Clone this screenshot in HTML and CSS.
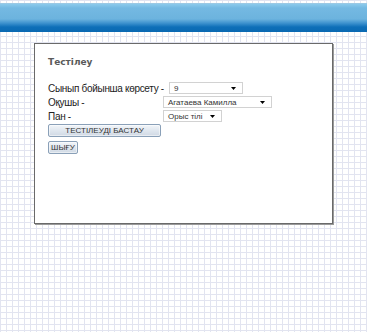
FILE: index.html
```html
<!DOCTYPE html>
<html lang="kk">
<head>
    <meta charset="UTF-8">
    <meta name="viewport" content="width=device-width, initial-scale=1.0">
    <title>Тестілеу</title>
    <link rel="stylesheet" href="styles.css">
</head>
<body>
    <header class="topbar"></header>

    <main class="panel">
        <h1 class="panel-title">Тестілеу</h1>

        <div class="row row-class">
            <span class="label">Сынып бойынша көрсету -</span>
            <div class="dropdown dd-class">
                <span>9</span>
                <svg width="5" height="3" viewBox="0 0 5 3"><path d="M0 0H5L2.5 3Z" fill="#000"/></svg>
            </div>
        </div>

        <div class="row">
            <span class="label label-fixed">Оқушы -</span>
            <div class="dropdown dd-student">
                <span>Агатаева Камилла</span>
                <svg width="5" height="3" viewBox="0 0 5 3"><path d="M0 0H5L2.5 3Z" fill="#000"/></svg>
            </div>
        </div>

        <div class="row">
            <span class="label label-fixed">Пан -</span>
            <div class="dropdown dd-subject">
                <span>Орыс тілі</span>
                <svg width="5" height="3" viewBox="0 0 5 3"><path d="M0 0H5L2.5 3Z" fill="#000"/></svg>
            </div>
        </div>

        <button class="btn btn-start">ТЕСТІЛЕУДІ БАСТАУ</button>
        <button class="btn btn-exit">ШЫҒУ</button>
    </main>
</body>
</html>
```

FILE: styles.css
```css
body {
    margin: 0;
    padding-top: 3px;
    font-family: 'Liberation Sans', Arial, sans-serif;
    color: #222;
    background-color: #fff;
    background-image:
        linear-gradient(to right, #e2e4f0 1px, transparent 1px),
        linear-gradient(to bottom, #e2e4f0 1px, transparent 1px);
    background-size: 6px 6px;
    min-height: 329px;
}

.topbar {
    height: 29px;
    background: linear-gradient(to bottom,
        #8ccaec 0px, #74b9e2 4px, #6cb3de 15px,
        #3f93cf 19px, #0e6fb8 23px, #0a69b2 28px, #0b5f9f 29px);
    border-top: 1px solid #9bc9e4;
    box-sizing: border-box;
}

.panel {
    margin: 11px 0 0 34px;
    width: 299px;
    height: 181px;
    box-sizing: border-box;
    background: #fff;
    border: 1px solid #6a6a6a;
    box-shadow: 1px 1px 0 #9a9a9a;
    padding: 12px 0 0 13px;
}

.panel-title {
    margin: 0;
    font-family: 'DejaVu Sans', Verdana, sans-serif;
    font-size: 9px;
    line-height: 13px;
    font-weight: bold;
    color: #5a5a5a;
}

.row {
    display: flex;
    align-items: center;
    height: 14px;
}

.row-class {
    margin-top: 12px;
}

.label {
    font-size: 10px;
    letter-spacing: -0.3px;
    color: #222;
    white-space: pre;
}

.label-fixed {
    width: 115px;
}

.row-class .label {
    margin-right: 5px;
}

.dropdown {
    display: flex;
    align-items: center;
    justify-content: space-between;
    height: 12px;
    box-sizing: border-box;
    border: 1px solid #d2d2d2;
    background: #fff;
    padding: 0 6px 0 4px;
    font-size: 8px;
    color: #333;
}

.dd-class {
    width: 74px;
}

.dd-student {
    width: 109px;
}

.dd-subject {
    width: 59px;
}

.btn {
    display: block;
    margin: 1px 0 0;
    padding: 0;
    height: 13px;
    font-family: 'Liberation Sans', Arial, sans-serif;
    font-size: 8px;
    color: #333;
    border: 1px solid #8aa0b8;
    border-radius: 2px;
    background: linear-gradient(to bottom, #f2f5f9, #e0e7ef 50%, #d0d9e4);
    box-shadow: inset 0 0 0 1px rgba(255, 255, 255, 0.5);
}

.btn-start {
    width: 113px;
}

.btn-exit {
    width: 30px;
    margin-top: 4px;
}
```
